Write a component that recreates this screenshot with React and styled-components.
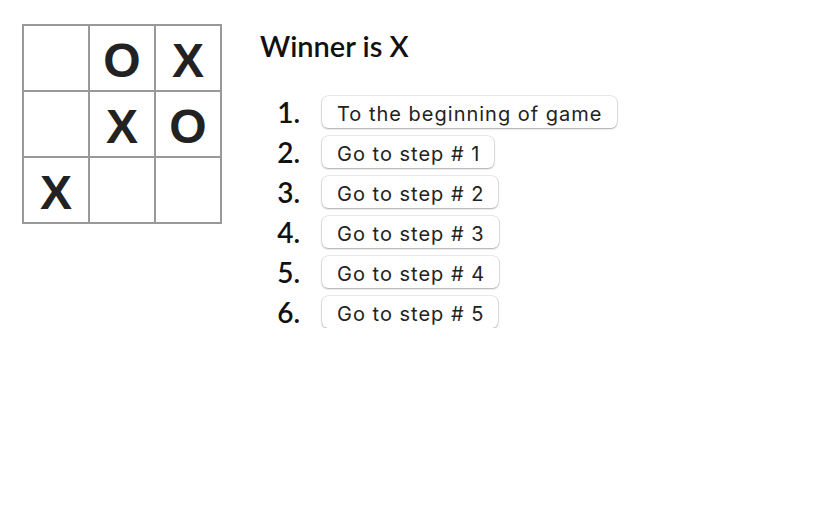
import React from "react";
import styled, { createGlobalStyle } from "styled-components";

const GlobalStyle = createGlobalStyle`
  body {
    margin: 0;
    background: #fff;
    font-family: "Lato", "DejaVu Sans", sans-serif;
  }
`;

const Game = styled.div`
  display: flex;
  align-items: flex-start;
  padding: 24px 0 0 22px;
`;

const Board = styled.div`
  display: grid;
  grid-template-columns: repeat(3, 64px);
  grid-template-rows: repeat(3, 64px);
  gap: 2px;
  padding: 2px;
  background: #999;
`;

const Square = styled.div`
  background: #fff;
  display: flex;
  align-items: center;
  justify-content: center;
  padding-top: 5px;
  box-sizing: border-box;
  font-family: "Liberation Sans", Arial, sans-serif;
  font-weight: 700;
  font-size: 48px;
  color: #222;
`;

const Info = styled.div`
  margin-left: 38px;
`;

const Status = styled.div`
  font-size: 29px;
  font-weight: 600;
  color: #111;
  margin-top: 4px;
  line-height: 36px;
`;

const Moves = styled.ol`
  list-style: none;
  margin: 32px 0 0;
  padding: 0;
  display: flex;
  flex-direction: column;
  gap: 8px;
`;

const Move = styled.li`
  display: flex;
  align-items: center;
  height: 32px;
`;

const Num = styled.span`
  width: 40px;
  text-align: right;
  font-size: 28px;
  font-weight: 600;
  color: #111;
  margin-right: 22px;
`;

const JumpButton = styled.button`
  height: 32px;
  padding: 3px 14px 0 15px;
  border: none;
  border-radius: 6px;
  background: #fff;
  color: #222;
  font-family: "Inter", "Open Sans", sans-serif;
  font-size: 20px;
  letter-spacing: 1px;
  box-shadow: 0 0 0 0.5px rgba(0, 0, 0, 0.16), 0 1px 2px rgba(0, 0, 0, 0.28);
`;

const squares = [null, "O", "X", null, "X", "O", "X", null, null];
const moves = [
  "To the beginning of game",
  "Go to step # 1",
  "Go to step # 2",
  "Go to step # 3",
  "Go to step # 4",
  "Go to step # 5",
];

const App = () => {
  return (
    <>
      <GlobalStyle />
      <Game>
        <Board>
          {squares.map((s, i) => (
            <Square key={i}>{s}</Square>
          ))}
        </Board>
        <Info>
          <Status>Winner is X</Status>
          <Moves>
            {moves.map((m, i) => (
              <Move key={i}>
                <Num>{i + 1}.</Num>
                <JumpButton>{m}</JumpButton>
              </Move>
            ))}
          </Moves>
        </Info>
      </Game>
    </>
  );
};

export default App;
